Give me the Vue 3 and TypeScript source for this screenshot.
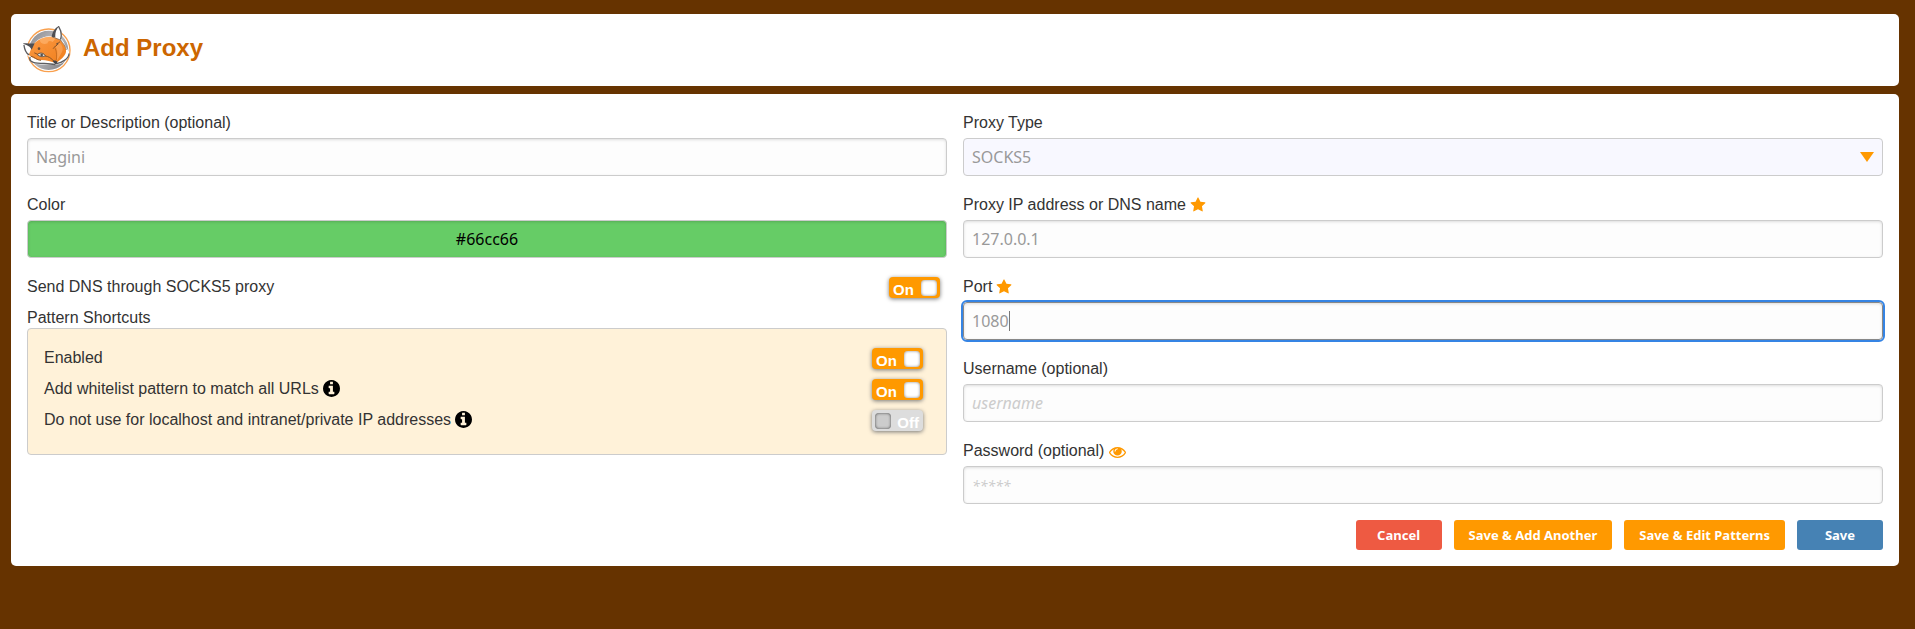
<script setup lang="ts">
import { computed, onMounted, reactive, ref } from 'vue'

const proxy = reactive({
  title: 'Nagini',
  color: '#66cc66',
  dns: true,
  type: 'SOCKS5',
  address: '127.0.0.1',
  port: '1080',
  username: '',
  password: '',
})

const shortcuts = reactive([
  { id: 'enabled', label: 'Enabled', info: false, on: true },
  { id: 'whitelist', label: 'Add whitelist pattern to match all URLs', info: true, on: true },
  { id: 'local', label: 'Do not use for localhost and intranet/private IP addresses', info: true, on: false },
])

const types = ['SOCKS5', 'SOCKS4', 'HTTP', 'HTTPS/SSL']
const showPassword = ref(false)
const portInput = ref<HTMLInputElement | null>(null)

// Digits share one width, so the caret sits one "ch" per digit after the padding.
const caretLeft = computed(() => `calc(9px + ${proxy.port.length}ch)`)

onMounted(() => {
  const el = portInput.value
  if (!el) return
  el.focus()
  el.setSelectionRange(el.value.length, el.value.length)
})

const starPath =
  'M1728 647q0 22-26 48l-363 354 86 500q1 7 1 20 0 21-10.500 35.500t-30.500 14.500q-19 0-40-12l-449-236-449 236q-22 12-40 12-21 0-31.500-14.500t-10.500-35.500q0-6 2-20l86-500-364-354q-25-27-25-48 0-37 56-46l502-73 225-455q19-41 49-41t49 41l225 455 502 73q56 9 56 46z'
const infoPath =
  'M1152 1376v-160q0-14-9-23t-23-9h-96v-512q0-14-9-23t-23-9h-320q-14 0-23 9t-9 23v160q0 14 9 23t23 9h96v320h-96q-14 0-23 9t-9 23v160q0 14 9 23t23 9h448q14 0 23-9t9-23zm-128-896v-160q0-14-9-23t-23-9h-192q-14 0-23 9t-9 23v160q0 14 9 23t23 9h192q14 0 23-9t9-23zm640 416q0 209-103 385.500t-279.500 279.500-385.500 103-385.500-103-279.500-279.500-103-385.500 103-385.500 279.500-279.500 385.500-103 385.500 103 279.500 279.500 103 385.500z'
const eyePath =
  'M1664 960q-152-236-381-353 61 104 61 225 0 185-131.500 316.500t-316.500 131.500-316.500-131.500-131.500-316.500q0-121 61-225-229 117-381 353 133 205 333.500 326.500t434.500 121.500 434.500-121.500 333.500-326.500zm-720-384q0-20-14-34t-34-14q-125 0-214.500 89.500t-89.500 214.500q0 20 14 34t34 14 34-14 14-34q0-86 61-147t147-61q20 0 34-14t14-34zm848 384q0 34-20 69-140 230-376.500 368.500t-499.500 138.500-499.500-139-376.500-368q-20-35-20-69t20-69q140-229 376.500-368t499.500-139 499.500 139 376.500 368q20 35 20 69z'
</script>

<template>
  <div class="page">
    <header class="card header">
      <svg class="logo" viewBox="9 18 144 144" aria-hidden="true">
        <defs>
          <linearGradient id="disc" x1="0" y1="0" x2="1" y2="1">
            <stop offset="0" stop-color="#858589" />
            <stop offset="0.45" stop-color="#bcbcc0" />
            <stop offset="1" stop-color="#77777b" />
          </linearGradient>
          <linearGradient id="fur" x1="0" y1="0" x2="1" y2="1">
            <stop offset="0" stop-color="#fb9a45" />
            <stop offset="1" stop-color="#f07f1c" />
          </linearGradient>
        </defs>
        <circle cx="86" cy="91" r="64" fill="#fff" stroke="#f9a04e" stroke-width="4" />
        <circle cx="86" cy="91" r="59" fill="url(#disc)" />
        <path d="M9 72 L41 73 C52 57 72 48 96 48 C98 36 105 25 115 19 C123 29 126 43 124 56 L132 68 C137 82 149 93 148 104 C144 119 127 130 116 133 L105 134 C85 134 61 138 32 126 L31 114 C18 105 11 91 9 72Z" fill="#fff" />
        <path d="M38 76 C52 57 76 49 97 50 L122 60 C128 71 140 80 138 96 C135 110 120 121 108 129 C93 125 76 119 61 120 C47 119 36 112 26 104 C31 96 32 87 38 76Z" fill="url(#fur)" />
        <path d="M60 58 C58 68 68 75 83 70 C82 63 90 60 98 66 L109 53 C92 48 73 49 60 58Z" fill="#fdb36d" opacity=".7" />
        <path d="M116 66 C130 76 131 90 123 101 L110 124 C112 104 114 90 107 80Z" fill="#fba65c" opacity=".7" />
        <path d="M8 71 C18 67 32 72 44 70 L35 89 C30 78 20 76 8 71Z M117 18 C105 24 96 36 95 51 L106 52 C105 39 108 29 117 18Z" fill="#4f4f53" />
        <path d="M12 76 C14 90 19 99 26 104 M116 20 C123 31 126 43 122 57 M30 112 C28 119 33 125 40 127 C60 133 84 128 105 134 M110 131 C124 128 146 117 147 102" fill="none" stroke="#5d5d60" stroke-width="4" stroke-linecap="round" />
        <path d="M97 51 L122 60 C128 70 138 78 139 90" fill="none" stroke="#6d5b50" stroke-width="2" />
        <path d="M52 104 C59 97 70 98 76 107 C69 112 59 110 52 104Z" fill="#e8e8e8" stroke="#55504c" stroke-width="3" />
        <circle cx="65" cy="105" r="4" fill="#55504c" />
        <path d="M100 85 C103 79 107 80 111 75 C112 71 115 68 119 66 M76 108 C85 109 94 114 101 123 M44 99 L53 103 M34 109 C45 111 48 120 62 121" fill="none" stroke="#8a5427" stroke-width="3" stroke-linecap="round" />
        <path d="M105 84 C111 96 110 109 109 120" fill="none" stroke="#b4611d" stroke-width="2" />
        <circle cx="57" cy="86" r="4" fill="#6b4f3a" />
        <circle cx="112" cy="71" r="3" fill="#6b4f3a" />
        <path d="M98 123 C103 120 110 122 112 125 C112 131 108 133 104 131Z" fill="#454549" />
      </svg>
      <h1>Add Proxy</h1>
    </header>

    <main class="card">
      <form class="form" @submit.prevent>
        <div class="columns">
          <div class="column">
            <div class="field">
              <label for="title">Title or Description (optional)</label>
              <input id="title" v-model="proxy.title" class="control" type="text" />
            </div>
            <div class="field">
              <label for="color">Color</label>
              <input id="color" v-model="proxy.color" class="control color" type="text" :style="{ backgroundColor: proxy.color }" />
            </div>
            <div class="row">
              <label for="dns">Send DNS through SOCKS5 proxy</label>
              <span class="switch">
                <input id="dns" v-model="proxy.dns" type="checkbox" />
                <span class="track"><span class="word">{{ proxy.dns ? 'On' : 'Off' }}</span><span class="knob"></span></span>
              </span>
            </div>
            <div class="group-title">Pattern Shortcuts</div>
            <div class="group">
              <div v-for="s in shortcuts" :key="s.id" class="row">
                <label :for="s.id">{{ s.label }}<svg v-if="s.info" class="info" viewBox="128 128 1536 1536" aria-hidden="true"><path :d="infoPath" /></svg></label>
                <span class="switch">
                  <input :id="s.id" v-model="s.on" type="checkbox" />
                  <span class="track"><span class="word">{{ s.on ? 'On' : 'Off' }}</span><span class="knob"></span></span>
                </span>
              </div>
            </div>
          </div>

          <div class="column">
            <div class="field">
              <label for="type">Proxy Type</label>
              <div class="overlay">
                <select id="type" v-model="proxy.type" class="control">
                  <option v-for="t in types" :key="t">{{ t }}</option>
                </select>
                <svg class="arrow" viewBox="0 0 14 10" aria-hidden="true"><path d="M0 0H14L7 10Z" /></svg>
              </div>
            </div>
            <div class="field">
              <label for="address">Proxy IP address or DNS name<svg class="star" viewBox="0 0 1792 1792" aria-hidden="true"><path :d="starPath" /></svg></label>
              <input id="address" v-model="proxy.address" class="control" type="text" />
            </div>
            <div class="field">
              <label for="port">Port<svg class="star" viewBox="0 0 1792 1792" aria-hidden="true"><path :d="starPath" /></svg></label>
              <div class="overlay">
                <input id="port" ref="portInput" v-model="proxy.port" class="control port" type="text" />
                <span class="caret" :style="{ left: caretLeft }"></span>
              </div>
            </div>
            <div class="field">
              <label for="username">Username (optional)</label>
              <input id="username" v-model="proxy.username" class="control" type="text" placeholder="username" />
            </div>
            <div class="field">
              <div class="label-line">
                <label for="password">Password (optional)</label>
                <button class="reveal" type="button" aria-label="Show password" @click="showPassword = !showPassword">
                  <svg class="eye" viewBox="0 384 1792 1152" aria-hidden="true"><path :d="eyePath" /></svg>
                </button>
              </div>
              <input id="password" v-model="proxy.password" class="control password" :type="showPassword ? 'text' : 'password'" placeholder="*****" />
            </div>
          </div>
        </div>

        <div class="actions">
          <button class="btn cancel" type="button">Cancel</button>
          <button class="btn" type="button">Save &amp; Add Another</button>
          <button class="btn" type="button">Save &amp; Edit Patterns</button>
          <button class="btn save" type="submit">Save</button>
        </div>
      </form>
    </main>
  </div>
</template>

<style>
body {
  background: #663300;
}
</style>

<style scoped>
.page {
  display: flex;
  flex-direction: column;
  gap: 8px;
  padding: 14px 16px 14px 11px;
  font: 16px/26px "Liberation Sans", Arial, sans-serif;
  color: #333;
}

.page *,
.page {
  box-sizing: border-box;
}

.card {
  background: #fff;
  border-radius: 5px;
}

.header {
  display: flex;
  gap: 12px;
  padding: 12px;
}

.logo {
  width: 48px;
  height: 48px;
}

h1 {
  margin: 0;
  font-size: 24px;
  line-height: 44px;
  color: #cc6600;
}

.form {
  padding: 16px;
}

.columns {
  display: grid;
  grid-template-columns: 1fr 1fr;
  gap: 16px;
}

.column {
  min-width: 0;
}

.field {
  display: flex;
  flex-direction: column;
  gap: 2px;
  margin-bottom: 16px;
}

.column .field:last-child {
  margin-bottom: 0;
}

label {
  display: flex;
  align-items: center;
  gap: 4px;
}

.control {
  display: block;
  width: 100%;
  height: 38px;
  margin: 0;
  padding: 0 8px;
  border: 1px solid #ccc;
  border-radius: 4px;
  background: #fdfdfd;
  box-shadow: inset 0 1px 3px #ddd;
  color: #999;
  font: 16px "Noto Sans", sans-serif;
}

.control::placeholder {
  color: #ccc;
  font-style: italic;
  opacity: 1;
}

.password::placeholder {
  font-size: 14px;
}

.control:focus {
  border-color: #888;
  outline: 2px solid #3584e4;
  outline-offset: 0;
}

.color {
  color: #000;
  text-align: center;
  box-shadow: inset 0 1px 3px #5a5;
}

.overlay {
  position: relative;
  font: 16px "Noto Sans", sans-serif;
}

select.control {
  appearance: none;
  background: #f8f8ff;
  box-shadow: none;
}

.arrow {
  position: absolute;
  top: 14px;
  right: 9px;
  width: 14px;
  height: 10px;
  fill: #ff9900;
  pointer-events: none;
}

.port {
  caret-color: transparent;
}

.caret {
  display: none;
  position: absolute;
  top: 9px;
  width: 1px;
  height: 20px;
  background: #777;
  pointer-events: none;
}

.port:focus + .caret {
  display: block;
}

.star {
  width: 16px;
  height: 16px;
  fill: #ff9900;
}

.info {
  width: 17px;
  height: 17px;
  margin-bottom: 2px;
  fill: #000;
}

.label-line {
  display: flex;
  align-items: center;
  gap: 5px;
}

.reveal {
  display: flex;
  padding: 2px 0 0;
  border: 0;
  background: none;
}

.eye {
  width: 17px;
  height: 11px;
  fill: #ff9900;
}

.row {
  display: flex;
  align-items: flex-start;
  justify-content: space-between;
  margin-bottom: 5px;
  padding-right: 7px;
}

.group-title {
  padding-top: 2px;
  line-height: 21px;
}

.group {
  padding: 16px;
  border: 1px solid #ccc;
  border-radius: 4px;
  background: #fff2d9;
}

.switch {
  position: relative;
  width: 51px;
  height: 21px;
  margin-top: 3px;
}

.switch input {
  position: absolute;
  inset: 0;
  z-index: 1;
  width: 100%;
  height: 100%;
  margin: 0;
  opacity: 0;
}

.track {
  display: flex;
  flex-direction: row-reverse;
  align-items: center;
  justify-content: space-between;
  height: 21px;
  padding: 0 3px;
  border-radius: 4px;
  background: #ddd;
  box-shadow: 0 1px 4px #777;
  color: #fff;
  font-size: 15px;
  font-weight: bold;
}

.word {
  padding: 4px 1px 0;
}

.knob {
  width: 16px;
  height: 16px;
  border-radius: 4px;
  background: #ccc;
  box-shadow: inset 0 0 3px #444;
}

.switch input:checked + .track {
  flex-direction: row;
  background: #ff9900;
}

.switch input:checked + .track .knob {
  background: #fff;
  box-shadow: inset 0 0 3px #888;
}

.actions {
  display: flex;
  flex-wrap: wrap;
  justify-content: flex-end;
  gap: 12px;
  margin-top: 16px;
}

.btn {
  min-width: 86px;
  height: 30px;
  padding: 0 15px;
  border: 0;
  border-radius: 3px;
  background: #ff9900;
  color: #fff;
  font: bold 13px "Noto Sans", sans-serif;
}

.cancel {
  background: #ee5a42;
}

.save {
  background: #4682b4;
}
</style>
